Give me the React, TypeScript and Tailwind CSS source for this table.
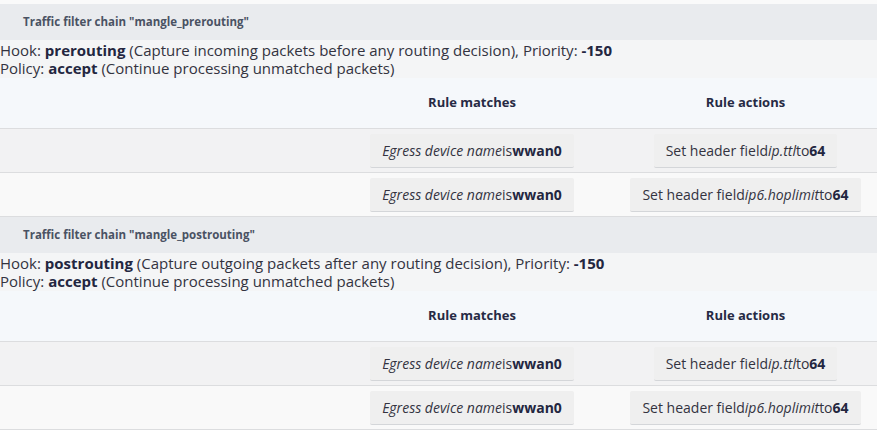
const chains = [
  {
    name: "mangle_prerouting",
    hook: "prerouting",
    hookDesc: "(Capture incoming packets before any routing decision), Priority: ",
    rules: [
      { field: "ip.ttl" },
      { field: "ip6.hoplimit" },
    ],
  },
  {
    name: "mangle_postrouting",
    hook: "postrouting",
    hookDesc: "(Capture outgoing packets after any routing decision), Priority: ",
    rules: [
      { field: "ip.ttl" },
      { field: "ip6.hoplimit" },
    ],
  },
]

function Pill({ children }: { children: React.ReactNode }) {
  return (
    <span className="inline-flex h-[34px] items-center whitespace-nowrap rounded-[2px] border-b border-[#d4d6d9] bg-[#efefef] px-[12px] text-[14px] text-[#33333f]">
      {children}
    </span>
  )
}

function Chain({ chain }: { chain: (typeof chains)[number] }) {
  return (
    <section>
      <div className="flex h-[36px] items-center bg-[#e9ebee] pl-[23px] text-[11.5px] font-bold text-[#4a5263]">
        Traffic filter chain "{chain.name}"
      </div>
      <div className="bg-[#f4f5f6] py-[1px] text-[15px] leading-[18px] text-[#33333f]">
        <div>
          Hook: <b className="text-[#232640]">{chain.hook}</b> {chain.hookDesc}
          <b className="text-[#232640]">-150</b>
        </div>
        <div>
          Policy: <b className="text-[#232640]">accept</b> (Continue processing unmatched packets)
        </div>
      </div>
      <div className="grid h-[51px] grid-cols-[330px_284px_1fr] items-center border-b border-[#dcdddf] bg-[#f5f8fb] text-[13px] font-bold text-[#262a44]">
        <div />
        <div className="text-center">Rule matches</div>
        <div className="text-center">Rule actions</div>
      </div>
      {chain.rules.map((r, i) => (
        <div
          key={i}
          className={`grid h-[44px] grid-cols-[330px_284px_1fr] items-center border-b border-[#dcdddf] ${
            i === 0 ? "bg-[#f2f2f3]" : "bg-[#f9f9f9]"
          }`}
        >
          <div />
          <div className="flex justify-center">
            <Pill>
              <i>Egress device name</i>is<b className="text-[#232640]">wwan0</b>
            </Pill>
          </div>
          <div className="flex justify-center">
            <Pill>
              Set header field<i>{r.field}</i>to<b className="text-[#232640]">64</b>
            </Pill>
          </div>
        </div>
      ))}
    </section>
  )
}

export default function App() {
  return (
    <div className="min-h-[430px] w-[877px] bg-[#f9f9f9] font-['Open_Sans',sans-serif]">
      <div className="h-[4px] bg-[#fafafa]" />
      {chains.map((c) => (
        <Chain key={c.name} chain={c} />
      ))}
    </div>
  )
}
